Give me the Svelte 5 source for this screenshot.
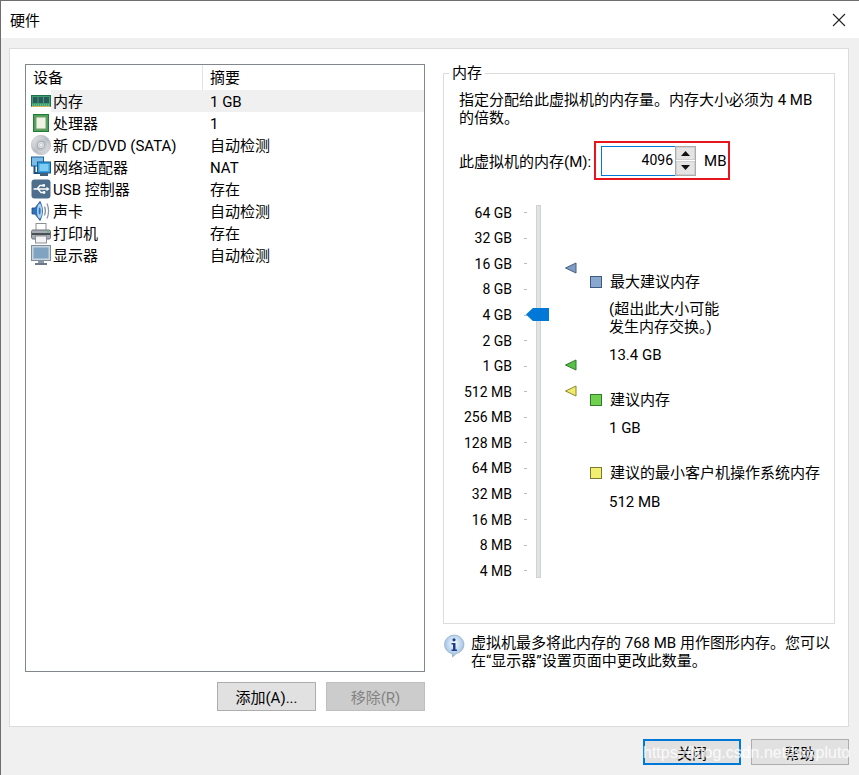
<script>
	const devices = [
		{ icon: 'ram', name: '内存', summary: '1 GB' },
		{ icon: 'cpu', name: '处理器', summary: '1' },
		{ icon: 'cd', name: '新 CD/DVD (SATA)', summary: '自动检测' },
		{ icon: 'net', name: '网络适配器', summary: 'NAT' },
		{ icon: 'usb', name: 'USB 控制器', summary: '存在' },
		{ icon: 'sound', name: '声卡', summary: '自动检测' },
		{ icon: 'printer', name: '打印机', summary: '存在' },
		{ icon: 'display', name: '显示器', summary: '自动检测' }
	];
	const scale = ['64 GB', '32 GB', '16 GB', '8 GB', '4 GB', '2 GB', '1 GB', '512 MB', '256 MB', '128 MB', '64 MB', '32 MB', '16 MB', '8 MB', '4 MB'];
</script>

<div class="window">
	<header class="titlebar">
		<span>硬件</span>
		<svg class="close" width="14" height="14" viewBox="0 0 14 14"><path d="M1 1 L13 13 M13 1 L1 13" stroke="#222" stroke-width="1.1" fill="none" /></svg>
	</header>

	<div class="body">
		<main class="panel">
			<section class="left">
				<div class="list">
					<div class="list-head">
						<div class="col-a">设备</div>
						<div class="col-b">摘要</div>
					</div>
					{#each devices as d, i}
						<div class="row">
							<span class="icon">
								{#if d.icon === 'ram'}
									<svg width="20" height="22" viewBox="0 0 20 22">
										<rect x="0.5" y="5.5" width="19" height="11" fill="#3f9f72" stroke="#1d7049" />
										<rect x="2" y="7" width="4.5" height="6" fill="#2a5a5c" />
										<rect x="7.5" y="7" width="4.5" height="6" fill="#2a5a5c" />
										<rect x="13" y="7" width="5" height="6" fill="#2a5a5c" />
										<path d="M1 15 H19" stroke="#9fd49a" stroke-width="1" stroke-dasharray="1 1" />
										<path d="M0.5 16.5 H19.5" stroke="#c9b45a" stroke-width="1" />
									</svg>
								{:else if d.icon === 'cpu'}
									<svg width="20" height="22" viewBox="0 0 20 22">
										<rect x="2.5" y="2.5" width="15" height="17" fill="#4aa258" stroke="#257a37" />
										<rect x="5" y="5" width="10" height="12" fill="#eff3e4" stroke="#7d9c73" />
									</svg>
								{:else if d.icon === 'cd'}
									<svg width="20" height="22" viewBox="0 0 20 22">
										<defs>
											<linearGradient id="cdg" x1="0" y1="0" x2="1" y2="1">
												<stop offset="0" stop-color="#eef0f2" />
												<stop offset=".5" stop-color="#b4bac0" />
												<stop offset="1" stop-color="#e4e7ea" />
											</linearGradient>
										</defs>
										<circle cx="10" cy="11" r="9.7" fill="url(#cdg)" stroke="#b0b5ba" stroke-width=".6" />
										<circle cx="10" cy="11" r="6.5" fill="none" stroke="#d8dbde" stroke-width=".7" />
										<circle cx="10" cy="11" r="3.6" fill="#dfe2e5" stroke="#9a9fa4" stroke-width=".7" />
										<circle cx="10" cy="11" r="1.4" fill="#fff" stroke="#a8acb0" stroke-width=".5" />
									</svg>
								{:else if d.icon === 'net'}
									<svg width="20" height="22" viewBox="0 0 20 22">
										<rect x="0.5" y="1" width="12" height="9" fill="#7bbce8" stroke="#1f5f96" />
										<path d="M3.5 10 V17 H9" stroke="#1f4f7e" stroke-width="2" fill="none" />
										<rect x="6.5" y="6" width="13" height="11" fill="#2fa0e2" stroke="#1c5788" />
										<rect x="8.5" y="8" width="9" height="7" fill="#82ccf2" />
										<rect x="9" y="17" width="8" height="3" fill="#40627f" />
									</svg>
								{:else if d.icon === 'usb'}
									<svg width="20" height="22" viewBox="0 0 20 22">
										<rect x="0.5" y="1.5" width="19" height="19" rx="3" fill="#4d6f8d" />
										<path d="M2.5 11 H16 M6 11 L9 7.5 H12 M7 11 L10 14.5 H12" stroke="#fff" stroke-width="1.3" fill="none" />
										<path d="M15.5 8.8 L18.5 11 L15.5 13.2 Z" fill="#fff" />
										<rect x="11.5" y="6.2" width="2.5" height="2.5" fill="#fff" />
										<circle cx="13" cy="14.5" r="1.4" fill="#fff" />
									</svg>
								{:else if d.icon === 'sound'}
									<svg width="20" height="22" viewBox="0 0 20 22">
										<path d="M1 8 H4 L9 1.5 Q14 11 9 20.5 L4 14 H1 Z" fill="#2f72bb" stroke="#1d4a82" stroke-width=".8" />
										<ellipse cx="8.6" cy="11" rx="2.6" ry="7.5" fill="#a6d0f0" />
										<ellipse cx="8.6" cy="11" rx="1" ry="3.5" fill="#2f72bb" />
										<path d="M13.5 6.5 Q15.3 11 13.5 15.5 M16 3.5 Q19.2 11 16 18.5" stroke="#8c97a5" stroke-width="1.3" fill="none" />
									</svg>
								{:else if d.icon === 'printer'}
									<svg width="20" height="22" viewBox="0 0 20 22">
										<rect x="5" y="1.5" width="10" height="7" fill="#fff" stroke="#8b8f96" />
										<rect x="0.5" y="8" width="19" height="9" rx="1.5" fill="#a6acb4" stroke="#6c7178" />
										<rect x="1" y="11" width="18" height="2" fill="#4a4f55" />
										<rect x="4.5" y="14" width="11" height="7" fill="#f4f4f4" stroke="#8b8f96" />
										<rect x="16" y="9" width="2" height="1.5" fill="#4fd05a" />
									</svg>
								{:else}
									<svg width="20" height="22" viewBox="0 0 20 22">
										<rect x="0.5" y="1.5" width="19" height="15" fill="#c8d4de" stroke="#7c8c9a" />
										<rect x="2.5" y="3.5" width="15" height="11" fill="#7fa3c0" />
										<rect x="7" y="17" width="6" height="2" fill="#8b99a6" />
										<rect x="4" y="19" width="12" height="2" fill="#6b7a88" />
									</svg>
								{/if}
							</span>
							<div class="col-a cell" class:selected={i === 0}>{d.name}</div>
							<div class="col-b cell" class:selected={i === 0}>{d.summary}</div>
						</div>
					{/each}
				</div>
				<div class="list-buttons">
					<button class="btn">添加(A)...</button>
					<button class="btn disabled">移除(R)</button>
				</div>
			</section>

			<section class="right">
				<fieldset class="group">
					<legend>内存</legend>
					<p class="hint">指定分配给此虚拟机的内存量。内存大小必须为 4 MB<br />的倍数。</p>

					<div class="mem-row">
						<span class="mem-label">此虚拟机的内存(M):</span>
						<div class="mem-highlight">
							<div class="spin">
								<div class="spin-value">4096</div>
								<div class="spin-arrows">
									<span class="arrow"><svg width="9" height="5" viewBox="0 0 9 5"><path d="M4.5 0 L9 5 H0 Z" fill="#111" /></svg></span>
									<span class="arrow"><svg width="9" height="5" viewBox="0 0 9 5"><path d="M0 0 H9 L4.5 5 Z" fill="#111" /></svg></span>
								</div>
							</div>
							<span class="unit">MB</span>
						</div>
					</div>

					<div class="slider">
						<div class="scale">
							{#each scale as s}
								<div class="tick"><span>{s}</span><i></i></div>
							{/each}
						</div>
						<div class="track"></div>
						<div class="thumb"></div>
						<svg class="marker m-blue" width="12" height="12" viewBox="0 0 12 12"><path d="M0.5 6 L11 1 V11 Z" fill="#7e9cc6" stroke="#47607f" /></svg>
						<svg class="marker m-green" width="12" height="12" viewBox="0 0 12 12"><path d="M0.5 6 L11 1 V11 Z" fill="#58c04a" stroke="#2a7a26" /></svg>
						<svg class="marker m-yellow" width="12" height="12" viewBox="0 0 12 12"><path d="M0.5 6 L11 1 V11 Z" fill="#f0ec6a" stroke="#8a8630" /></svg>

						<div class="legend-col">
							<div class="leg leg-max">
								<div class="leg-title"><i class="sw blue"></i>最大建议内存</div>
								<p>(超出此大小可能<br />发生内存交换。)</p>
								<p class="val">13.4 GB</p>
							</div>
							<div class="leg leg-rec">
								<div class="leg-title"><i class="sw green"></i>建议内存</div>
								<p class="val">1 GB</p>
							</div>
							<div class="leg leg-min">
								<div class="leg-title"><i class="sw yellow"></i>建议的最小客户机操作系统内存</div>
								<p class="val">512 MB</p>
							</div>
						</div>
					</div>
				</fieldset>

				<div class="info">
					<svg width="22" height="24" viewBox="0 0 22 24">
						<defs>
							<radialGradient id="ib" cx="50%" cy="40%" r="60%">
								<stop offset="0" stop-color="#ffffff" />
								<stop offset="1" stop-color="#8fb8e0" />
							</radialGradient>
						</defs>
						<path d="M11 1 A10 9.5 0 0 1 13 19.8 L9.5 23 V19.8 A10 9.5 0 0 1 11 1 Z" fill="url(#ib)" stroke="#8fa9c4" stroke-width=".7" />
						<circle cx="11" cy="5.8" r="1.6" fill="#1d3f8a" />
						<path d="M8.5 9 H12.5 V15.5 H14 V17 H8.5 V15.5 H10 V10.5 H8.5 Z" fill="#1d3f8a" />
					</svg>
					<p>虚拟机最多将此内存的 768 MB 用作图形内存。您可以<br />在“显示器”设置页面中更改此数量。</p>
				</div>
			</section>
		</main>

		<footer class="actions">
			<button class="btn focus">关闭</button>
			<button class="btn">帮助</button>
		</footer>
	</div>
	<div class="watermark">https://blog.csdn.net/hxxpluto</div>
</div>

<style>
	:global(body) {
		margin: 0;
	}
	.window {
		position: relative;
		width: 859px;
		height: 775px;
		box-sizing: border-box;
		border-top: 1px solid #6e6e6e;
		border-left: 1px solid #6e6e6e;
		display: flex;
		flex-direction: column;
		font-family: Roboto, 'Noto Sans CJK SC', sans-serif;
		font-size: 15px;
		color: #000;
		background: #fff;
		overflow: hidden;
	}
	.titlebar {
		height: 37px;
		flex: none;
		display: flex;
		align-items: center;
		justify-content: space-between;
		padding: 0 13px 0 9px;
		background: #fff;
	}
	.close {
		display: block;
	}
	.body {
		flex: 1;
		background: #f0f0f0;
		display: flex;
		flex-direction: column;
		padding: 10px 10px 0 8px;
	}
	.panel {
		height: 679px;
		box-sizing: border-box;
		flex: none;
		background: #fff;
		border: 1px solid #dcdcdc;
		display: flex;
		padding: 15px 13px 0 15px;
	}
	.left {
		width: 400px;
		flex: none;
	}
	.list {
		height: 608px;
		box-sizing: border-box;
		border: 1px solid #82878e;
		background: #fff;
	}
	.list-head {
		display: flex;
		height: 25px;
		line-height: 27px;
	}
	.list-head .col-a {
		width: 169px;
		padding-left: 7px;
		border-right: 1px solid #e3e3e3;
	}
	.list-head .col-b {
		padding-left: 7px;
	}
	.row {
		display: flex;
		height: 22px;
		line-height: 24px;
	}
	.icon {
		width: 26px;
		flex: none;
		padding-left: 5px;
		box-sizing: border-box;
		display: flex;
		align-items: center;
		margin-right: -1px;
	}
	.cell {
		white-space: nowrap;
		height: 22px;
	}
	.row .col-a {
		width: 156px;
		flex: none;
		padding-left: 2px;
	}
	.row .col-b {
		flex: 1;
		padding-left: 1px;
	}
	.selected {
		background: #f0f0f0;
	}
	.list-buttons {
		display: flex;
		justify-content: flex-end;
		gap: 10px;
		margin-top: 10px;
	}
	.btn {
		width: 99px;
		height: 29px;
		box-sizing: border-box;
		border: 1px solid #adadad;
		background: #e1e1e1;
		font: inherit;
		color: #000;
		padding: 0;
	}
	.btn.disabled {
		background: #cccccc;
		color: #838383;
		border-color: #bfbfbf;
	}
	.btn.focus {
		border: 2px solid #0078d7;
	}
	.right {
		width: 392px;
		flex: none;
		margin-left: 18px;
	}
	.group {
		margin: -1px 0 0;
		height: 561px;
		box-sizing: border-box;
		border: 1px solid #dcdcdc;
		padding: 0 0 0 15px;
		position: relative;
		min-width: 0;
	}
	legend {
		padding: 0 3px;
		margin-left: -10px;
		line-height: 20px;
	}
	.hint {
		margin: 8px 0 0;
		line-height: 18px;
	}
	.mem-row {
		display: flex;
		align-items: center;
		margin-top: 14px;
	}
	.mem-label {
		white-space: nowrap;
	}
	.mem-highlight {
		display: flex;
		align-items: center;
		margin-left: 3px;
		width: 136px;
		height: 39px;
		box-sizing: border-box;
		border: 2px solid #e8161c;
		padding-left: 5px;
	}
	.spin {
		display: flex;
		height: 30px;
		width: 95px;
		box-sizing: border-box;
		border: 1px solid #0078d7;
		border-right: none;
	}
	.spin-value {
		flex: 1;
		text-align: right;
		line-height: 26px;
		padding-right: 2px;
		font-size: 14px;
	}
	.spin-arrows {
		width: 21px;
		flex: none;
		display: flex;
		flex-direction: column;
		gap: 1px;
		box-sizing: border-box;
		margin: -1px 0;
		border: 1px solid #acacac;
		background: #fff;
	}
	.arrow {
		flex: 1;
		background: #e4e4e4;
		border: 1px solid #d0d0d0;
		display: flex;
		align-items: center;
		justify-content: center;
	}
	.arrow svg {
		display: block;
	}
	.unit {
		margin-left: 8px;
	}
	.slider {
		position: relative;
		display: flex;
		margin-top: 25px;
		margin-left: -15px;
		height: 374px;
	}
	.scale {
		width: 68px;
		flex: none;
		display: flex;
		flex-direction: column;
		margin-top: -5px;
	}
	.tick {
		height: 25.57px;
		flex: none;
		display: flex;
		align-items: center;
		justify-content: flex-end;
		white-space: nowrap;
		line-height: 1;
		position: relative;
		font-size: 14px;
	}
	.tick i {
		position: absolute;
		right: -15px;
		width: 3px;
		height: 1px;
		background: #bbb;
	}
	.track {
		position: absolute;
		left: 92px;
		top: 0;
		width: 5px;
		height: 373px;
		background: #e0e3e3;
		border: 1px solid #d0d3d3;
		box-sizing: border-box;
	}
	.thumb {
		position: absolute;
		left: 82px;
		top: 103px;
		width: 23px;
		height: 13px;
		background: #0078d7;
		clip-path: polygon(0 50%, 30% 0, 100% 0, 100% 100%, 30% 100%);
	}
	.marker {
		position: absolute;
		left: 121px;
	}
	.m-blue {
		top: 57px;
	}
	.m-green {
		top: 154px;
	}
	.m-yellow {
		top: 180px;
	}
	.legend-col {
		position: absolute;
		left: 146px;
		top: 0;
	}
	.leg {
		position: absolute;
		left: 0;
		white-space: nowrap;
	}
	.leg p {
		margin: 0;
		padding-left: 19px;
		line-height: 18px;
	}
	.leg .val {
		margin-top: 10px;
	}
	.leg-max {
		top: 67px;
	}
	.leg-max p:first-of-type {
		margin-top: 8px;
	}
	.leg-rec {
		top: 185px;
	}
	.leg-rec .val {
		margin-top: 9px;
	}
	.leg-min {
		top: 258px;
	}
	.leg-title {
		display: flex;
		align-items: center;
		line-height: 20px;
	}
	.sw {
		width: 10px;
		height: 10px;
		border: 1px solid #555;
		margin-right: 8px;
		flex: none;
	}
	.blue {
		background: #89a8d0;
		border-color: #3f5a80;
	}
	.green {
		background: #6fd04f;
		border-color: #2f7d2a;
	}
	.yellow {
		background: #f2ee70;
		border-color: #7c7a30;
	}
	.info {
		display: flex;
		gap: 6px;
		margin-top: 10px;
		align-items: flex-start;
	}
	.info p {
		margin: 0;
		line-height: 18px;
	}
	.actions {
		display: flex;
		justify-content: flex-end;
		gap: 10px;
		margin-top: 12px;
		padding-right: 0;
	}
	.actions .btn {
		height: 26px;
		width: 98px;
	}
	.watermark {
		position: absolute;
		left: 642px;
		top: 743px;
		font-family: 'Liberation Sans', sans-serif;
		font-size: 16px;
		color: rgb(255 255 255 / 65%);
		text-shadow: 0 0 1px rgb(255 255 255 / 50%);
		white-space: nowrap;
	}
</style>
